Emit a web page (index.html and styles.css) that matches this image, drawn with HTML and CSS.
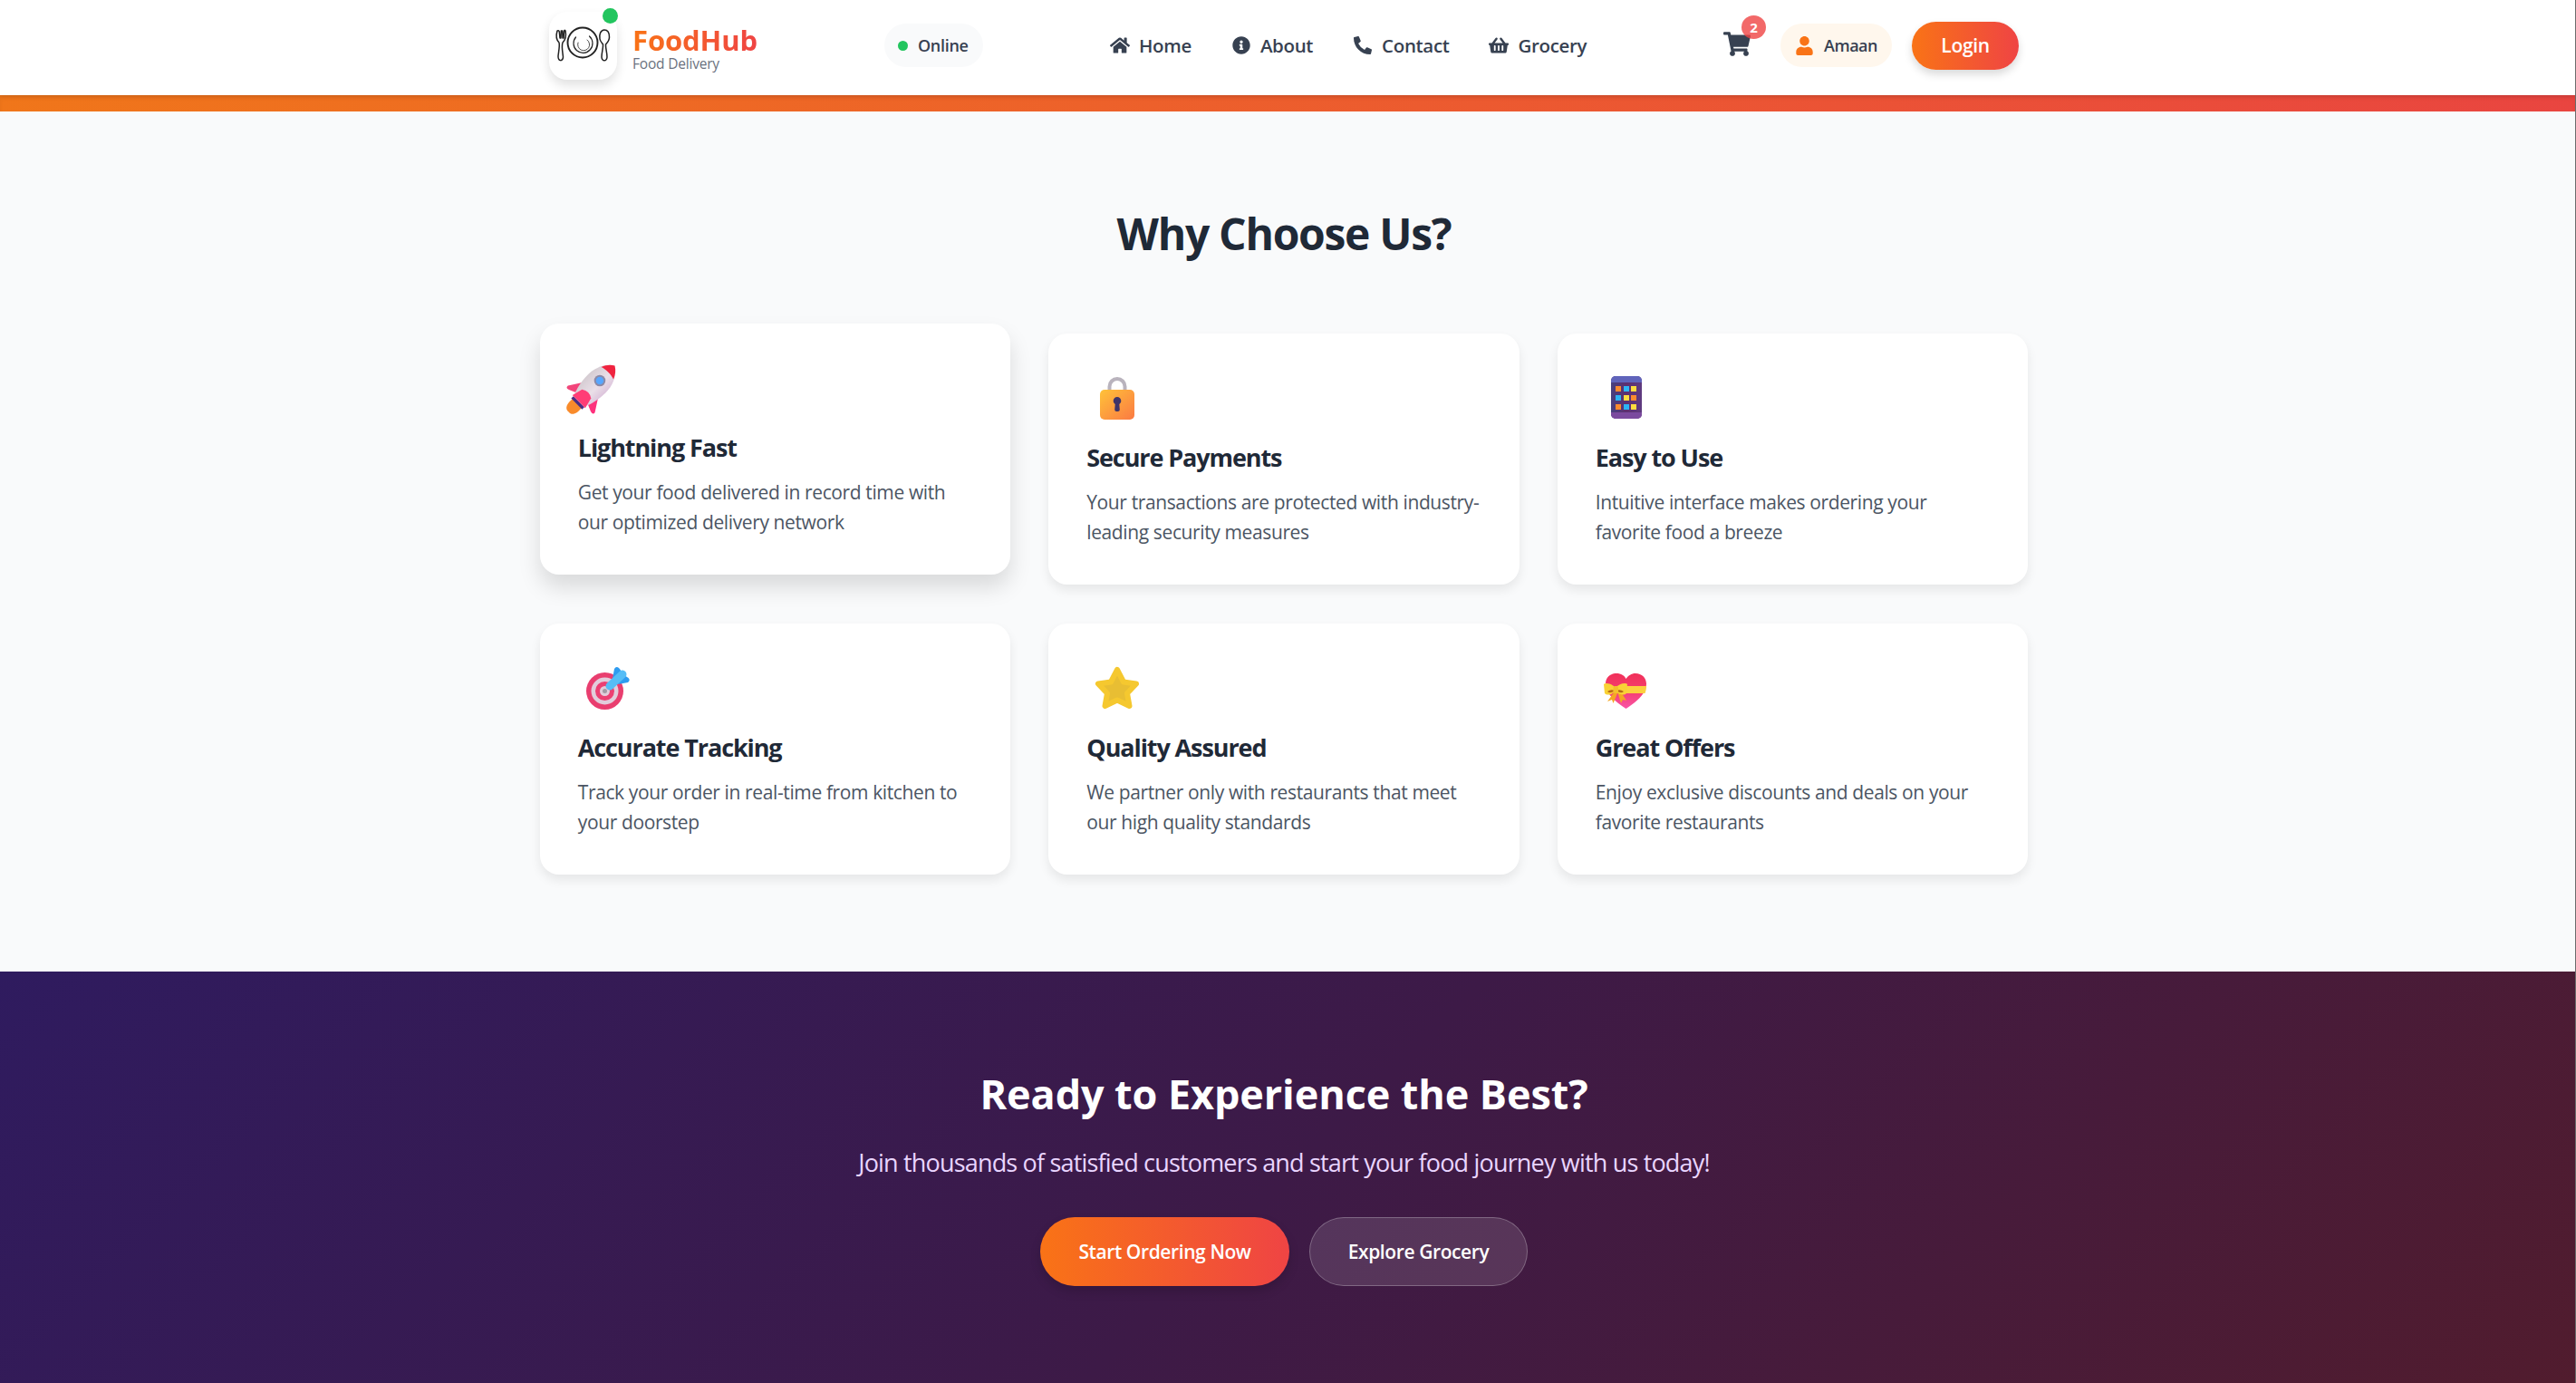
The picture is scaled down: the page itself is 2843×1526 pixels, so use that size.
FILE: index.html
```html
<!DOCTYPE html>
<html lang="en">
<head>
<meta charset="utf-8">
<title>FoodHub</title>
<link rel="stylesheet" href="styles.css">
</head>
<body>
<header class="header">
  <div class="brand">
    <div class="logo">
      <svg class="logo-art" viewBox="0 0 75 75" fill="none" stroke="#222" stroke-width="1.5" stroke-linecap="round" stroke-linejoin="round">
        <circle cx="37" cy="34" r="16.5" stroke-width="1.9"/>
        <path d="M44.5 27a10.5 10.5 0 1 1-15 1" stroke-width="1.2"/>
        <path d="M42 31a6.5 6.5 0 1 1-10 3" stroke-width=".8"/>
        <path d="M9 21c-1.5 5-1 10 2 13 1 3-.5 10-1 15 0 6 5 6 5.500 1-.5-5-2-12-.5-16 3-3 4-8 3-13-.8-1.500-1.500 0-1.500 1l-.5 7h-1l-.3-8h-1.400l-.3 8h-1l-.7-7c-.2-1.500-1.800-1.500-2.300-1z"/>
        <path d="M61 20c-4 0-6 5-5 10 .5 3 2.500 4.500 3.500 6 .3 4-1.500 9-1.500 14 .5 5 5.500 5 6 0 0-5-1.800-10-1.500-14 1.500-1.500 4-4 4-8 0-5-2-8-5.500-8z"/>
      </svg>
      <span class="logo-dot"></span>
    </div>
    <div class="brand-text">
      <div class="brand-name">FoodHub</div>
      <div class="brand-sub">Food Delivery</div>
    </div>
  </div>
  <div class="status"><span class="status-dot"></span>Online</div>
  <nav class="nav">
    <a class="nav-link"><svg class="nav-icon" viewBox="0 0 576 512"><path d="M280.37 148.26L96 300.11V464a16 16 0 0 0 16 16l112.06-.29a16 16 0 0 0 15.92-16V368a16 16 0 0 1 16-16h64a16 16 0 0 1 16 16v95.64a16 16 0 0 0 16 16.05L464 480a16 16 0 0 0 16-16V300L295.67 148.26a12.19 12.19 0 0 0-15.3 0zM571.6 251.47L488 182.56V44.05a12 12 0 0 0-12-12h-56a12 12 0 0 0-12 12v72.61L318.47 43a48 48 0 0 0-61 0L4.34 251.47a12 12 0 0 0-1.6 16.9l25.5 31A12 12 0 0 0 45.15 301l235.22-193.74a12.19 12.19 0 0 1 15.3 0L530.9 301a12 12 0 0 0 16.9-1.6l25.5-31a12 12 0 0 0-1.7-16.93z"/></svg>Home</a>
    <a class="nav-link"><svg class="nav-icon" viewBox="0 0 512 512"><path d="M256 8C119.043 8 8 119.083 8 256c0 136.997 111.043 248 248 248s248-111.003 248-248C504 119.083 392.957 8 256 8zm0 110c23.196 0 42 18.804 42 42s-18.804 42-42 42-42-18.804-42-42 18.804-42 42-42zm56 254c0 6.627-5.373 12-12 12h-88c-6.627 0-12-5.373-12-12v-24c0-6.627 5.373-12 12-12h12v-64h-12c-6.627 0-12-5.373-12-12v-24c0-6.627 5.373-12 12-12h64c6.627 0 12 5.373 12 12v100h12c6.627 0 12 5.373 12 12v24z"/></svg>About</a>
    <a class="nav-link"><svg class="nav-icon" viewBox="0 0 512 512"><path d="M497.39 361.8l-112-48a24 24 0 0 0-28 6.9l-49.6 60.6A370.66 370.66 0 0 1 130.6 204.11l60.6-49.6a23.94 23.94 0 0 0 6.9-28l-48-112A24.16 24.16 0 0 0 122.6.61l-104 24A24 24 0 0 0 0 48c0 256.5 207.9 464 464 464a24 24 0 0 0 23.4-18.6l24-104a24.29 24.29 0 0 0-14.01-27.6z"/></svg>Contact</a>
    <a class="nav-link"><svg class="nav-icon" viewBox="0 0 576 512"><path d="M576 216v16c0 13.255-10.745 24-24 24h-8l-26.113 182.788C514.509 462.435 494.257 480 470.37 480H105.63c-23.887 0-44.139-17.565-47.518-41.212L32 256h-8c-13.255 0-24-10.745-24-24v-16c0-13.255 10.745-24 24-24h67.341l106.78-146.821c10.395-14.292 30.407-17.453 44.701-7.058 14.293 10.395 17.453 30.408 7.058 44.701L170.477 192h235.046L326.12 82.821c-10.395-14.292-7.234-34.306 7.059-44.701 14.291-10.395 34.306-7.235 44.701 7.058L484.659 192H552c13.255 0 24 10.745 24 24zM312 392V280c0-13.255-10.745-24-24-24s-24 10.745-24 24v112c0 13.255 10.745 24 24 24s24-10.745 24-24zm112 0V280c0-13.255-10.745-24-24-24s-24 10.745-24 24v112c0 13.255 10.745 24 24 24s24-10.745 24-24zm-224 0V280c0-13.255-10.745-24-24-24s-24 10.745-24 24v112c0 13.255 10.745 24 24 24s24-10.745 24-24z"/></svg>Grocery</a>
  </nav>
  <div class="actions">
    <div class="cart">
      <svg class="cart-icon" viewBox="0 0 576 512"><path d="M528.12 301.319l47.273-208C578.806 78.301 567.391 64 551.99 64H159.208l-9.166-44.81C147.758 8.021 137.93 0 126.529 0H24C10.745 0 0 10.745 0 24v16c0 13.255 10.745 24 24 24h69.883l70.248 343.435C147.325 417.1 136 435.222 136 456c0 30.928 25.072 56 56 56s56-25.072 56-56c0-15.674-6.447-29.835-16.824-40h209.647C430.447 426.165 424 440.326 424 456c0 30.928 25.072 56 56 56s56-25.072 56-56c0-22.172-12.888-41.332-31.579-50.405l5.517-24.276c3.413-15.018-8.002-29.319-23.403-29.319H218.117l-6.545-32h293.145c11.206 0 20.92-7.754 23.403-18.681z"/></svg>
      <span class="cart-badge">2</span>
    </div>
    <div class="user"><svg class="user-icon" viewBox="0 0 448 512"><path d="M224 256c70.7 0 128-57.3 128-128S294.7 0 224 0 96 57.3 96 128s57.3 128 128 128zm89.6 32h-16.7c-22.2 10.2-46.9 16-72.9 16s-50.6-5.800-72.9-16h-16.7C60.2 288 0 348.2 0 422.4V464c0 26.5 21.5 48 48 48h352c26.500 0 48-21.500 48-48v-41.600c0-74.200-60.200-134.400-134.400-134.400z"/></svg>Amaan</div>
    <button class="login">Login</button>
  </div>
</header>
<div class="stripe"></div>

<main class="why">
  <h2 class="why-title">Why Choose Us?</h2>
  <div class="grid">
    <article class="card card-raised">
      <div class="emoji">
        <svg viewBox="0 0 64 64">
          <defs>
            <linearGradient id="rb" x1="0" x2="1"><stop offset="0" stop-color="#d5ccd2"/><stop offset=".6" stop-color="#eadfe8"/><stop offset="1" stop-color="#dcc4dc"/></linearGradient>
            <linearGradient id="rp" x1="0" x2="1"><stop offset="0" stop-color="#f0487a"/><stop offset="1" stop-color="#ff2f7d"/></linearGradient>
          </defs>
          <g transform="translate(15 30) rotate(45)">
            <path d="M0 36 C-6 37-8 30-7 23 L7 23 C8 30 6 37 0 36Z" fill="#f98b2b"/>
            <path d="M-12 2 L-21 16 Q-21.500 20-17 18.500 L-9 15Z M12 2 L21 16 Q21.500 20 17 18.500 L9 15Z" fill="url(#rp)"/>
            <path d="M0-36 C10-30 14-18 14-8 C14 2 12 12 8 20 L-8 20 C-12 12-14 2-14-8 C-14-18-10-30 0-36Z" fill="url(#rb)"/>
            <path d="M0-36 C4.500-33.500 7.500-29.500 9.500-24.500 C4-26.500-4-26.500-9.500-24.500 C-7.500-29.500-4.500-33.500 0-36Z" fill="#f0233f"/>
            <circle cx="0" cy="-12.700" r="6.300" fill="#8b8aa8"/>
            <circle cx="0" cy="-12.700" r="4.300" fill="#58a6ff"/>
            <rect x="-8.500" y="20" width="17" height="3.500" fill="#4b2d82"/>
            <path d="M-7 8 Q0 3 7 8 L10 20 L-10 20Z" fill="#ff3d76"/>
          </g>
        </svg>
      </div>
      <h3 class="card-title">Lightning Fast</h3>
      <p class="card-text">Get your food delivered in record time with our optimized delivery network</p>
    </article>
    <article class="card">
      <div class="emoji">
        <svg viewBox="0 0 64 64">
          <defs><linearGradient id="lk" x1="0" y1="0" x2="1" y2="1"><stop offset="0" stop-color="#ffc239"/><stop offset="1" stop-color="#fb7a43"/></linearGradient></defs>
          <path d="M25.500 22v-5.500a8.500 8.500 0 0 1 17 0V22" fill="none" stroke="#b9b3bd" stroke-width="4"/>
          <rect x="15" y="20" width="38" height="33" rx="5" fill="url(#lk)"/>
          <path d="M34 28a4.300 4.300 0 0 1 4.300 4.300c0 1.700-1 3-2 3.800l.5 6a2 2 0 0 1-2 2h-1.600a2 2 0 0 1-2-2l.5-6c-1-.8-2-2.100-2-3.800A4.300 4.300 0 0 1 34 28z" fill="#3f3468"/>
        </svg>
      </div>
      <h3 class="card-title">Secure Payments</h3>
      <p class="card-text">Your transactions are protected with industry-leading security measures</p>
    </article>
    <article class="card">
      <div class="emoji">
        <svg viewBox="0 0 64 64">
          <defs><linearGradient id="pd" x1="0" x2="1"><stop offset="0" stop-color="#47417f"/><stop offset=".5" stop-color="#5d2f70"/><stop offset="1" stop-color="#5f3b80"/></linearGradient></defs>
          <rect x="17" y="5" width="34" height="47" rx="5" fill="url(#pd)"/>
          <path d="M17 12v-2a5 5 0 0 1 5-5h24a5 5 0 0 1 5 5v2z" fill="#6064bb"/>
          <path d="M17 45v2a5 5 0 0 0 5 5h24a5 5 0 0 0 5-5v-2z" fill="#7b4a9e"/>
          <g class="keys">
            <rect x="22" y="16" width="6" height="6" fill="#fb8a2e"/><rect x="31" y="16" width="6" height="6" fill="#2cb4f5"/><rect x="39" y="16" width="6" height="6" fill="#fcdc3f"/>
            <rect x="22" y="26" width="6" height="6" fill="#2cb4f5"/><rect x="31" y="26" width="6" height="6" fill="#fcdc3f"/><rect x="39" y="26" width="6" height="6" fill="#fb8a2e"/>
            <rect x="22" y="36" width="6" height="6" fill="#fb8a2e"/><rect x="31" y="36" width="6" height="6" fill="#2cb4f5"/><rect x="39" y="36" width="6" height="6" fill="#fcdc3f"/>
          </g>
        </svg>
      </div>
      <h3 class="card-title">Easy to Use</h3>
      <p class="card-text">Intuitive interface makes ordering your favorite food a breeze</p>
    </article>
    <article class="card">
      <div class="emoji">
        <svg viewBox="0 0 64 64">
          <circle cx="29.500" cy="32.500" r="20.500" fill="#e93e6f"/>
          <circle cx="29.500" cy="32.500" r="15" fill="#e2cddb"/>
          <circle cx="29.500" cy="32.500" r="10.500" fill="#ec3f72"/>
          <circle cx="29.500" cy="32.500" r="5.500" fill="#e2cddb"/>
          <circle cx="29.500" cy="32.500" r="2.500" fill="#a29ba6"/>
          <path d="M38 19 L40 8 Q42 4.500 45 7 Q49 11 48 16Z" fill="#2f9cf0"/>
          <path d="M44 25 L55 23 Q58 20.500 55.500 18 Q52 14.500 47 15Z" fill="#2f9cf0"/>
          <path d="M35 27 L49 14" fill="none" stroke="#56bdf6" stroke-width="9" stroke-linecap="round"/>
        </svg>
      </div>
      <h3 class="card-title">Accurate Tracking</h3>
      <p class="card-text">Track your order in real-time from kitchen to your doorstep</p>
    </article>
    <article class="card">
      <div class="emoji">
        <svg viewBox="0 0 64 64">
          <path d="M34 9 L41 22.500 L55 24.500 L45 35 L47.500 49 L34 42.500 L20.500 49 L23 35 L13 24.500 L27 22.500Z" fill="#e8be33" stroke="#f5c82f" stroke-width="6" stroke-linejoin="round"/>
        </svg>
      </div>
      <h3 class="card-title">Quality Assured</h3>
      <p class="card-text">We partner only with restaurants that meet our high quality standards</p>
    </article>
    <article class="card">
      <div class="emoji">
        <svg viewBox="0 0 64 64">
          <defs><linearGradient id="ht" x1="0" y1="0" x2="0" y2="1"><stop offset="0" stop-color="#f1305a"/><stop offset=".5" stop-color="#f43f6f"/><stop offset="1" stop-color="#f953a7"/></linearGradient></defs>
          <path d="M33.500 52 C23 45 11 36 11 24.500 C11 17 17 13 23 13 C28 13 32 15.500 33.500 19 C36 15.500 39.500 13 44 13 C51 13 56 18 56 24.500 C56 36 44 45 33.500 52Z" fill="url(#ht)"/>
          <path d="M22 27 H56 Q56 31 54.500 35 H22Z" fill="#fcd03f"/>
          <path d="M21 33 L13 44 L18 42 L19.500 46 L24 35Z M24 33 L28 46 L30 42 L34 43 L27 32Z" fill="#f5a623"/>
          <path d="M22 29 C18 24 11 23 9 25 L10 35 C13 38 18 36 22 33Z M22 29 C26 24 33 23 35 25 L34 35 C31 38 26 36 22 33Z" fill="#f9d235"/>
          <path d="M13 33 Q17 30 21 32 Q16 36 13 33Z M31 33 Q27 30 23 32 Q28 36 31 33Z" fill="#b76a18"/>
          <rect x="19.500" y="27" width="5.500" height="8" rx="2" fill="#f3c02c"/>
        </svg>
      </div>
      <h3 class="card-title">Great Offers</h3>
      <p class="card-text">Enjoy exclusive discounts and deals on your favorite restaurants</p>
    </article>
  </div>
</main>

<section class="cta">
  <h2 class="cta-title">Ready to Experience the Best?</h2>
  <p class="cta-text">Join thousands of satisfied customers and start your food journey with us today!</p>
  <div class="cta-actions">
    <a class="btn btn-primary">Start Ordering Now</a>
    <a class="btn btn-ghost">Explore Grocery</a>
  </div>
</section>
</body>
</html>
```
FILE: styles.css
```css
* { box-sizing: border-box; margin: 0; padding: 0; }
html { background: #fff; }
body {
  height: 1526px;
  overflow: hidden;
  border-right: 1px solid #6b6b6b;
  background: #f9fafb;
  font-family: "Open Sans", "Noto Sans", sans-serif;
  color: #1f2937;
}
.header {
  position: relative;
  z-index: 2;
  height: 105px;
  background: #fff;
  display: flex;
  align-items: center;
  padding-left: 606px;
  padding-bottom: 5px;
  box-shadow: 0 1px 4px rgba(0, 0, 0, .12);
}
.brand { display: flex; align-items: center; gap: 17px; width: 370px; }
.logo {
  position: relative;
  width: 75px;
  height: 75px;
  background: #fff;
  border-radius: 20px;
  box-shadow: 0 6px 12px rgba(0, 0, 0, .12);
}
.logo-art { display: block; width: 75px; height: 75px; }
.logo-dot {
  position: absolute;
  top: -4px;
  right: -1px;
  width: 17px;
  height: 17px;
  border-radius: 50%;
  background: #22c55e;
}
.brand-text { display: flex; flex-direction: column; margin-top: 5px; }
.brand-name {
  font-size: 31px;
  line-height: 34px;
  font-weight: 700;
  letter-spacing: -.1px;
  background: linear-gradient(90deg, #f97316, #ef4444);
  -webkit-background-clip: text;
  background-clip: text;
  color: transparent;
}
.brand-sub { font-size: 15.500px; line-height: 18px; color: #6b7280; letter-spacing: -.2px; }
.status {
  display: flex;
  align-items: center;
  gap: 11px;
  height: 48px;
  width: 109px;
  padding-left: 15px;
  border-radius: 24px;
  background: #f9fafb;
  font-size: 18px;
  font-weight: 600;
  letter-spacing: -.3px;
  color: #374151;
}
.status-dot { width: 11px; height: 11px; border-radius: 50%; background: #22c55e; }
.nav { display: flex; align-items: center; gap: 44px; margin-left: 140px; }
.nav-link {
  display: flex;
  align-items: center;
  gap: 10px;
  font-size: 20.500px;
  font-weight: 600;
  letter-spacing: -.35px;
  color: #374151;
}
.nav-icon { width: 22px; height: 20px; fill: #374151; }
.actions { display: flex; align-items: center; margin-left: 151px; }
.cart { position: relative; width: 30px; height: 29px; margin-right: 33px; margin-top: -3px; }
.cart-icon { display: block; width: 30px; height: 29px; fill: #374151; }
.cart-badge {
  position: absolute;
  top: -17px;
  left: 20px;
  width: 27px;
  height: 26px;
  border-radius: 50%;
  background: rgba(239, 68, 68, .8);
  color: #fff;
  font-size: 15px;
  font-weight: 700;
  line-height: 26px;
  text-align: center;
}
.user {
  display: flex;
  align-items: center;
  gap: 11px;
  width: 123px;
  height: 48px;
  padding-left: 16px;
  border-radius: 24px;
  background: #fff7ed;
  font-size: 18px;
  font-weight: 600;
  letter-spacing: -.5px;
  color: #374151;
}
.user-icon { width: 21px; height: 21px; fill: #f97316; }
.login {
  width: 118px;
  height: 53px;
  margin-left: 22px;
  border: 0;
  border-radius: 27px;
  background: linear-gradient(90deg, #f97316, #ef4444);
  color: #fff;
  font-family: inherit;
  font-size: 21px;
  font-weight: 600;
  letter-spacing: -.3px;
  box-shadow: 0 5px 10px rgba(0, 0, 0, .15);
}
.stripe {
  height: 18px;
  background: linear-gradient(90deg, #f0761a, #e94540);
  box-shadow: inset 0 4px 4px rgba(0, 0, 0, .05);
}
.why { height: 949px; padding: 102px 8px 0 0; }
.why-title {
  font-size: 48px;
  line-height: 66px;
  font-weight: 700;
  letter-spacing: -1.3px;
  text-align: center;
  color: #1f2937;
}
.grid {
  display: grid;
  grid-template-columns: repeat(3, 519.500px);
  column-gap: 42px;
  row-gap: 43px;
  justify-content: center;
  margin-top: 77px;
}
.card {
  height: 277px;
  padding: 42px 42px 0;
  background: #fff;
  border-radius: 21px;
  box-shadow: 0 6px 12px rgba(0, 0, 0, .08);
}
.card-raised {
  transform: translateY(-11px);
  box-shadow: 0 14px 24px rgba(0, 0, 0, .13);
}
.emoji { height: 64px; }
.emoji svg { display: block; width: 64px; height: 64px; overflow: visible; }
.card-title {
  margin-top: 12px;
  font-size: 27px;
  line-height: 38px;
  font-weight: 700;
  letter-spacing: -1.1px;
  color: #1f2937;
}
.card-text {
  margin-top: 14px;
  font-size: 21px;
  line-height: 32.500px;
  letter-spacing: -.38px;
  color: #4b5563;
}
.cta {
  height: 454px;
  padding: 106px 8px 0 0;
  background: linear-gradient(135deg, #2f1b5f 0%, #3d1a47 50%, #511c2e 100%);
  text-align: center;
}
.cta-title {
  font-size: 45px;
  line-height: 58px;
  font-weight: 700;
  letter-spacing: -.1px;
  color: #fff;
}
.cta-text {
  margin-top: 27px;
  font-size: 27px;
  line-height: 40px;
  letter-spacing: -.82px;
  color: #e9d5ff;
}
.cta-actions { display: flex; justify-content: center; gap: 22px; margin-top: 40px; }
.btn {
  display: flex;
  align-items: center;
  justify-content: center;
  height: 76px;
  border-radius: 38px;
  font-size: 21px;
  font-weight: 600;
  letter-spacing: -.4px;
  color: #fff;
}
.btn-primary {
  width: 275px;
  background: linear-gradient(90deg, #f97316, #ef4444);
  box-shadow: 0 6px 12px rgba(0, 0, 0, .15);
}
.btn-ghost {
  width: 241px;
  background: rgba(255, 255, 255, .12);
  border: 1.500px solid rgba(255, 255, 255, .25);
}
```
